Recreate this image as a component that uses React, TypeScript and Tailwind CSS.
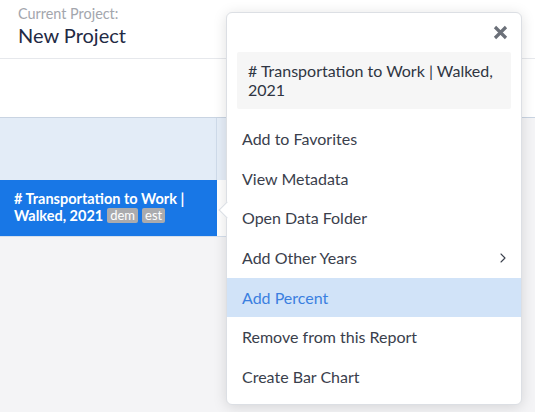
import { ChevronRight } from "lucide-react";

const items = [
  "Add to Favorites",
  "View Metadata",
  "Open Data Folder",
  "Add Other Years",
  "Add Percent",
  "Remove from this Report",
  "Create Bar Chart",
];

export default function App() {
  return (
    <div className="relative w-[535px] h-[412px] overflow-hidden bg-[#f4f4f6] font-['Lato',sans-serif]">
      {/* header */}
      <div className="h-[59px] bg-white border-b border-[#e6e8ec] px-[18px] pt-[5px]">
        <p className="text-[14.4px] leading-[17px] text-[#a3a6ad]">Current Project:</p>
        <p className="text-[20px] leading-[26px] text-[#1f2a44]">New Project</p>
      </div>
      <div className="h-[59px] bg-white border-b border-[#c9d4e2]" />

      {/* table */}
      <div className="flex">
        <div className="w-[217px]">
          <div className="h-[62px] bg-[#e3ecf7] border-r border-[#cfdbea]" />
          <div className="h-[56px] bg-[#1877e6] px-[14px] pt-[10px] text-[14.5px] leading-[17px] font-bold text-white">
            <p># Transportation to Work |</p>
            <p className="flex items-center">
              Walked, 2021
              <span className="ml-[4px] rounded-[2px] bg-[#aaabae] px-[3px] text-[13px] leading-[15px] font-normal">dem</span>
              <span className="ml-[4px] rounded-[2px] bg-[#aaabae] px-[3px] text-[13px] leading-[15px] font-normal">est</span>
            </p>
          </div>
          <div className="h-[1px] bg-[#d5dfec]" />
        </div>
        <div className="w-[10px]">
          <div className="h-[62px] bg-[#e6eef8]" />
          <div className="h-[56px] bg-white" />
          <div className="h-[1px] bg-[#d5dfec]" />
        </div>
      </div>

      {/* popover */}
      <div className="absolute left-[226px] top-[12px] w-[296px] h-[393px] rounded-[6px] border border-[#dcdfe4] bg-white shadow-[0_2px_14px_rgba(0,0,0,0.13)]">
        {/* caret */}
        <div className="absolute left-[-6px] top-[191px] w-[12px] h-[12px] rotate-45 bg-white border-l border-b border-[#d9dde3]" />
        <div className="relative flex justify-end pr-[13px] pt-[12px] h-[39px]">
          <svg width="15" height="15" viewBox="0 0 15 15" className="text-[#6b7079]">
            <path d="M2 2L13 13M13 2L2 13" stroke="currentColor" strokeWidth="3.2" />
          </svg>
        </div>
        <div className="relative mx-[10px] rounded-[2px] bg-[#f6f6f6] px-[11px] py-[10px] text-[16px] leading-[18.5px] text-[#2f3542]">
          # Transportation to Work | Walked, 2021
        </div>
        <div className="relative mt-[10px]">
          {items.map((label, i) => (
            <div
              key={label}
              className={
                i === 4
                  ? "flex h-[39.7px] items-center justify-between bg-[#d1e3f8] pl-[15px] pr-[10px] text-[16px] text-[#3b7fe0]"
                  : "flex h-[39.7px] items-center justify-between pl-[15px] pr-[10px] text-[16px] text-[#3a404c]"
              }
            >
              <span>{label}</span>
              {label === "Add Other Years" && (
                <ChevronRight className="h-[16px] w-[16px] text-[#3a404c]" strokeWidth={1.6} />
              )}
            </div>
          ))}
        </div>
      </div>
    </div>
  );
}
